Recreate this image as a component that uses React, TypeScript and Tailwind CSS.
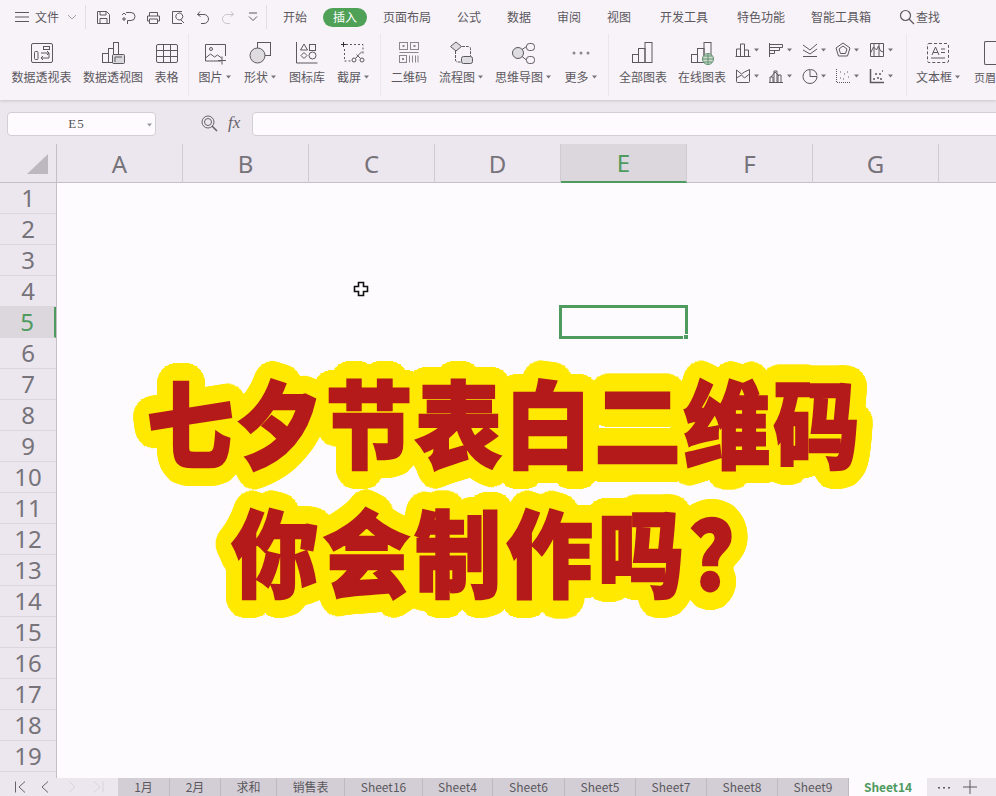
import React from 'react';

const cjk = "font-['Noto_Sans_CJK_SC','Noto_Sans',sans-serif]";

// round outline for the headline, built from a ring of shadows
const ring = (r: number, n: number) =>
  Array.from({ length: n }, (_, i) => {
    const a = (i / n) * Math.PI * 2;
    return `${(Math.cos(a) * r).toFixed(1)}px ${(Math.sin(a) * r).toFixed(1)}px 0 #ffe900`;
  });
const outline = [...ring(17, 64), ...ring(12, 40), ...ring(6, 20)].join(',');

const Svg = ({ w = 24, h = 24, children }: { w?: number; h?: number; children: React.ReactNode }) => (
  <svg width={w} height={h} viewBox={`0 0 ${w} ${h}`} fill="none" stroke="#5b585e" strokeWidth="1">
    {children}
  </svg>
);

const Caret = () => (
  <svg width="5" height="4" viewBox="0 0 5 4" className="ml-[3px] shrink-0">
    <path d="M0 .5h5L2.5 3.5z" fill="#77737a" />
  </svg>
);

const icons: Record<string, React.ReactNode> = {
  pivot: (
    <Svg>
      <rect x="1.5" y="2.5" width="21" height="19" rx="1.5" />
      <rect x="13.5" y="5.5" width="6" height="3" />
      <rect x="4.5" y="10.5" width="3.5" height="8" rx="1" />
      <path d="M11 12h8v5h-7M17 10l2 2-2 2M13 15l-2 2 2 2" />
    </Svg>
  ),
  pivotChart: (
    <Svg>
      <rect x="1.5" y="12.5" width="6" height="9" />
      <rect x="7.5" y="7.5" width="5" height="14" />
      <rect x="12.5" y="1.5" width="5" height="14" />
      <rect x="11.5" y="13.5" width="12" height="9" rx="1" fill="#dbd8dc" />
      <path d="M14 21v-5h7" />
    </Svg>
  ),
  table: (
    <Svg>
      <rect x="1.5" y="3.5" width="21" height="18" rx="1.5" />
      <path d="M1.5 9.5h21M1.5 15.5h21M8.5 3.5v18M15.5 3.5v18" />
    </Svg>
  ),
  image: (
    <Svg>
      <path d="M18 20H2.5V3.500h20V15" />
      <circle cx="8" cy="8" r="1.500" />
      <path d="M2.500 17l5-4 4 3 3-2 4 3M19 15.500v8M15 19.500h8" />
    </Svg>
  ),
  shape: (
    <Svg>
      <rect x="9.500" y="1.500" width="13" height="13" fill="#f8f3f9" />
      <circle cx="9.500" cy="14.500" r="7.500" fill="#dfdce0" />
    </Svg>
  ),
  lib: (
    <Svg>
      <path d="M1.500 1v21h21" />
      <path d="M9 3l3.500 6h-7z" />
      <rect x="14.500" y="3.500" width="6" height="6" />
      <path d="M9 11.500l3 3-3 3-3-3z" />
      <circle cx="17.500" cy="14.500" r="3.500" />
    </Svg>
  ),
  crop: (
    <Svg>
      <path d="M5 3.500h17v10M3.500 8v12h7" strokeDasharray="2 2" />
      <path d="M0 3.500h5M2.500 1v5" stroke="#333" />
      <circle cx="13" cy="19" r="2" />
      <circle cx="21" cy="19" r="2" />
      <path d="M14.500 17.500l3.500-4 3-3M19.500 17.500l-4-4" />
    </Svg>
  ),
  qr: (
    <Svg>
      <rect x="2.500" y="1.500" width="8" height="7" stroke="#8a868d" />
      <rect x="13.500" y="1.500" width="8" height="7" stroke="#8a868d" />
      <rect x="5.500" y="4" width="2" height="2" fill="#8a868d" stroke="none" />
      <rect x="16.500" y="4" width="2" height="2" fill="#8a868d" stroke="none" />
      <path d="M2.500 11.500h19" stroke="#8a868d" />
      <rect x="2.500" y="14.500" width="7" height="7" stroke="#8a868d" />
      <rect x="5" y="17" width="2" height="2" fill="#8a868d" stroke="none" />
      <path d="M12.500 14.500v7M15.500 14.500v7M18.500 14.500v7M21 14.500v7" stroke="#8a868d" />
    </Svg>
  ),
  flow: (
    <Svg>
      <path d="M7 1l5.500 4.500L7 10 1.500 5.500z" fill="#dfdce0" />
      <path d="M13 5.500h6.500a2 2 0 0 1 2 2v8M6.500 10v9a2 2 0 0 0 2 2h4" strokeDasharray="3 1" />
      <rect x="12.500" y="15.500" width="11" height="7" rx="2" fill="#dfdce0" />
    </Svg>
  ),
  mind: (
    <Svg>
      <circle cx="7" cy="12" r="5.500" fill="#dfdce0" />
      <rect x="15.500" y="2.500" width="8" height="7" rx="3" />
      <rect x="15.500" y="15.500" width="8" height="7" rx="3" />
      <path d="M11 8.500l4.500-3M11 15.500l4.500 3.500" />
    </Svg>
  ),
  more: (
    <Svg>
      <circle cx="5" cy="12" r="1.500" fill="#8a868d" stroke="none" />
      <circle cx="12" cy="12" r="1.500" fill="#8a868d" stroke="none" />
      <circle cx="19" cy="12" r="1.500" fill="#8a868d" stroke="none" />
    </Svg>
  ),
  allChart: (
    <Svg>
      <rect x="1.500" y="13.500" width="6" height="8" />
      <rect x="7.500" y="7.500" width="6.500" height="14" />
      <rect x="14" y="1.500" width="7" height="20" />
    </Svg>
  ),
  online: (
    <Svg>
      <rect x="1.500" y="13.500" width="6" height="8" />
      <rect x="7.500" y="7.500" width="6.500" height="14" />
      <rect x="14" y="1.500" width="7" height="14" />
      <circle cx="18" cy="18" r="5.500" fill="#cfdcd2" stroke="#5f8f6d" />
      <path d="M12.500 18h11M18 12.500v11M14 15h8M14 21h8" stroke="#5f8f6d" />
    </Svg>
  ),
  textbox: (
    <Svg>
      <rect x="1.500" y="2.500" width="21" height="19" rx="1.500" strokeDasharray="3 2" />
      <path d="M6 14l3.500-8 3.500 8M7 11.500h5M15 8h4M15 11.500h4M5 17h14" />
    </Svg>
  ),
};

const small: React.ReactNode[] = [
  <path key="a" d="M1.500 14V7h4v7M5.500 14V2h4v12M9.500 14V8h4v6M.5 14.500h15" />,
  <path key="b" d="M1.500 1v14M1.500 2.500h13v3h-13M1.500 5.500h10v3h-10M1.500 8.500h5v3h-5" />,
  <path key="c" d="M1 3l7 5 7-6M1 8l7 4 7-5M1 14.500h14" />,
  <path key="d" d="M8 1l7 5-2.500 8h-9L1 6zM8 4l4 3-1.500 4.500h-5L4 7z" />,
  <path key="e" d="M1.500 1.500h13v13h-13zM1.500 11l3-6 3 3 2-4 2 5 3 1M5 1.500v13M10 1.500v13" />,
  <path key="f" d="M1.500 2l5 4 3-2 5-2.500v12a1 1 0 0 1-1 1h-11a1 1 0 0 1-1-1zM1.500 10l5-3 3 3 5-4" />,
  <path key="g" d="M1 14.500h14M2 14V9h3v5M6 14V3h3v11M10 14V7h3v7M3 9l4-5 4 4" />,
  <path key="h" d="M8 1.500a7 7 0 1 0 7 7H8zM8.500 1.500a7 7 0 0 1 6.500 6" />,
  <path key="i" d="M1.500 1v13.500H15M5 10h1M9 6h1M8 11h1M12 4h1M13 9h1M5 4h1" strokeDasharray="1 1" />,
  <path key="j" d="M1.500 1v13.500H15M4 11h2M8 10h2M11 11h2M6 6h2M10 6h2M13 3h1" strokeWidth="1.500" />,
];

const tools = [
  { label: '数据透视表', icon: 'pivot', w: 'w-[71px]' },
  { label: '数据透视图', icon: 'pivotChart', w: 'w-[72px]' },
  { label: '表格', icon: 'table', w: 'w-[35px]', end: true },
  { label: '图片', icon: 'image', w: 'w-[43px]', caret: true },
  { label: '形状', icon: 'shape', w: 'w-[48px]', caret: true },
  { label: '图标库', icon: 'lib', w: 'w-[46px]' },
  { label: '截屏', icon: 'crop', w: 'w-[46px]', caret: true, end: true },
  { label: '二维码', icon: 'qr', w: 'w-[48px]' },
  { label: '流程图', icon: 'flow', w: 'w-[56px]', caret: true },
  { label: '思维导图', icon: 'mind', w: 'w-[68px]', caret: true },
  { label: '更多', icon: 'more', w: 'w-[47px]', caret: true, end: true },
  { label: '全部图表', icon: 'allChart', w: 'w-[60px]' },
  { label: '在线图表', icon: 'online', w: 'w-[58px]' },
];

const tabs = [
  { label: '开始', w: 'w-[56px]' },
  { label: '插入', w: 'w-[44px]', on: true },
  { label: '页面布局', w: 'w-[80px]' },
  { label: '公式', w: 'w-[44px]' },
  { label: '数据', w: 'w-[56px]' },
  { label: '审阅', w: 'w-[44px]' },
  { label: '视图', w: 'w-[56px]' },
  { label: '开发工具', w: 'w-[74px]' },
  { label: '特色功能', w: 'w-[80px]' },
  { label: '智能工具箱', w: 'w-[80px]' },
];

const quick: React.ReactNode[] = [
  <path key="s" d="M1.500 1.500h9l3 3v9h-12zM4 1.500v3.500h6v-3.500M4 13.500v-5h7v5" />,
  <path key="p" d="M5 2.500h5a4 4 0 0 1 0 8H6.500v3.500M1 5l2-2 2 2M1 9h4M3 7v4" />,
  <path key="r" d="M3.500 6V2.500h8V6M3.500 11H1.500V6h12v5h-2M3.500 9h8v4.500h-8z" />,
  <path key="v" d="M11 1.500H1.500v12H11M6.500 9.500a3.500 3.500 0 1 0 0-6 3.500 3.500 0 0 0 0 6zM9 9l4 4" />,
  <path key="u" d="M4 1.500L1.500 4.500 4.500 6.500M1.500 4.500H8a4.500 4.500 0 0 1 0 9H5" />,
  <path key="d" d="M10 1.500l2.500 3-3 2M12.500 4.500H6a4.500 4.500 0 0 0 0 9h3" stroke="#c9c5cb" />,
  <path key="m" d="M3 3h8M3 6.500l4 4 4-4" />,
];

const sheets = [
  { label: '1月', w: 'w-[52px]' },
  { label: '2月', w: 'w-[51px]' },
  { label: '求和', w: 'w-[56px]' },
  { label: '销售表', w: 'w-[68px]' },
  { label: 'Sheet16', w: 'w-[78px]' },
  { label: 'Sheet4', w: 'w-[70px]' },
  { label: 'Sheet6', w: 'w-[72px]' },
  { label: 'Sheet5', w: 'w-[71px]' },
  { label: 'Sheet7', w: 'w-[71px]' },
  { label: 'Sheet8', w: 'w-[71px]' },
  { label: 'Sheet9', w: 'w-[71px]' },
];

const headline = `${cjk} font-black text-[#b51a1a] text-[86px] leading-none whitespace-nowrap scale-y-[1.1] origin-top [-webkit-text-stroke:2.5px_#b51a1a]`;

const Divider = () => <div className="mx-[4px] h-[62px] w-px shrink-0 bg-[#ebe6ec]" />;

export default function App() {
  return (
    <div className={`relative flex h-[796px] w-[996px] flex-col overflow-hidden bg-[#fefbfe] ${cjk}`}>
      {/* ribbon */}
      <div className="z-10 h-[100px] shrink-0 bg-[#f8f3f9] shadow-[0_1px_3px_#c9c4cb] text-xs text-[#5b585e]">
        <div className="flex h-[34px] items-center pl-[15px]">
          <svg width="14" height="12" viewBox="0 0 14 12" stroke="#5b585e" className="shrink-0">
            <path d="M0 1.500h14M0 6h14M0 10.500h14" />
          </svg>
          <span className="ml-[6px] w-[26px] shrink-0">文件</span>
          <svg width="10" height="6" viewBox="0 0 10 6" fill="none" stroke="#a5a1a8" className="ml-[6px] shrink-0">
            <path d="M1 1l4 4 4-4" />
          </svg>
          <div className="ml-[8px] h-[24px] w-px shrink-0 bg-[#e3dee5]" />
          <div className="ml-[5px] flex shrink-0">
            {quick.map((p, i) => (
              <div key={i} className="flex w-[25px] justify-center">
                <svg width="15" height="15" viewBox="0 0 15 15" fill="none" stroke="#5b585e">{p}</svg>
              </div>
            ))}
          </div>
          <div className="h-[24px] w-px shrink-0 bg-[#e3dee5]" />
          {tabs.map((t) => (
            <div key={t.label} className={`${t.w} flex shrink-0 justify-center`}>
              {t.on ? (
                <span className="flex h-[19px] w-[44px] items-center justify-center rounded-full bg-[#4fa157] text-white">{t.label}</span>
              ) : (
                t.label
              )}
            </div>
          ))}
          <div className="ml-[18px] flex shrink-0 items-center">
            <svg width="16" height="16" viewBox="0 0 16 16" fill="none" stroke="#5b585e" strokeWidth="1.2">
              <circle cx="6.500" cy="6.500" r="5" />
              <path d="M10 10l5 5" />
            </svg>
            <span className="ml-px">查找</span>
          </div>
        </div>

        <div className="flex h-[66px] items-start pl-[6px] whitespace-nowrap">
          {tools.map((t) => (
            <React.Fragment key={t.label}>
              <div className={`${t.w} flex shrink-0 flex-col items-center pt-[7px]`}>
                {icons[t.icon]}
                <div className="mt-[4px] flex items-center">
                  {t.label}
                  {t.caret && <Caret />}
                </div>
              </div>
              {t.end && <Divider />}
            </React.Fragment>
          ))}
          <div className="grid w-[171px] shrink-0 grid-cols-5 gap-y-[10px] pt-[8px] pl-[4px]">
            {small.map((p, i) => (
              <div key={i} className="flex items-center">
                <svg width="16" height="16" viewBox="0 0 16 16" fill="none" stroke="#5b585e">{p}</svg>
                <Caret />
              </div>
            ))}
          </div>
          <Divider />
          <div className="flex w-[54px] shrink-0 flex-col items-center pt-[7px]">
            {icons.textbox}
            <div className="mt-[4px] flex items-center">
              文本框
              <Caret />
            </div>
          </div>
          <div className="flex w-[31px] shrink-0 flex-col overflow-hidden pt-[7px] pl-[9px]">
            <div className="ml-[10px] h-[24px] w-[12px] rounded-l-[2px] border border-r-0 border-[#5b585e]" />
            <div className="mt-[4px] text-[11px] leading-4 whitespace-nowrap">页眉</div>
          </div>
        </div>
      </div>

      {/* formula bar */}
      <div className="flex h-[44px] shrink-0 items-start bg-[#ece7ee] pt-[12px]">
        <div className="relative ml-[7px] flex h-[24px] w-[149px] shrink-0 items-center justify-center rounded-[4px] border border-[#d3ced5] bg-[#fefbfe] pr-[10px] font-['Liberation_Serif',serif] text-[13px] tracking-[1px] text-[#555]">
          E5
          <svg width="5" height="4" viewBox="0 0 5 4" className="absolute right-[3px] top-[10px]">
            <path d="M0 .5h5L2.500 3.500z" fill="#9a969d" />
          </svg>
        </div>
        <svg width="17" height="17" viewBox="0 0 17 17" fill="none" stroke="#66626a" className="ml-[45px] mt-[3px] shrink-0">
          <circle cx="7" cy="7" r="6" />
          <circle cx="7" cy="7" r="3.500" />
          <path d="M11 11l5 5" strokeWidth="1.600" />
        </svg>
        <span className="ml-[10px] mt-[1px] w-[16px] shrink-0 font-['Liberation_Serif',serif] text-[17px] italic leading-[20px] text-[#66626a]">fx</span>
        <div className="ml-[8px] h-[24px] w-[760px] shrink-0 rounded-[4px] border border-[#d3ced5] bg-[#fefbfe]" />
      </div>

      {/* column headers */}
      <div className="flex h-[39px] shrink-0 border-b border-[#c4bfc6] bg-[#ece7ee] font-['Noto_Sans',sans-serif] text-2xl text-[#77737a]">
        <div className="flex w-[57px] shrink-0 items-start justify-end border-r border-[#c4bfc6] pt-[10px] pr-[8px]">
          <svg width="21" height="20" viewBox="0 0 21 20">
            <path d="M21 0v20H0z" fill="#bdb8bf" />
          </svg>
        </div>
        {['A', 'B', 'C', 'D', 'E', 'F', 'G'].map((c) => (
          <div
            key={c}
            className={`flex h-[39px] w-[126px] shrink-0 items-center justify-center border-r border-[#d0cbd2] ${
              c === 'E' ? 'border-b-2 border-b-[#4f9a5f] bg-[#dcd7dd] text-[#4f9a5f]' : ''
            }`}
          >
            {c}
          </div>
        ))}
      </div>

      {/* sheet body */}
      <div className="relative flex-1">
        <div className="h-full w-[57px] border-r border-[#c4bfc6] bg-[#ece7ee] font-['Noto_Sans',sans-serif] text-2xl text-[#77737a]">
          {Array.from({ length: 19 }, (_, i) => i + 1).map((n) => (
            <div
              key={n}
              className={`flex h-[31px] items-center justify-center border-b border-[#dcd7dd] ${
                n === 5 ? 'border-r-2 border-r-[#4f9a5f] bg-[#dcd7dd] text-[#4f9a5f]' : ''
              }`}
            >
              {n}
            </div>
          ))}
        </div>

        {/* selected cell */}
        <div className="absolute left-[559px] top-[122px] h-[34px] w-[129px] border-[3px] border-[#4f9a5f]">
          <div className="absolute -bottom-[4px] -right-[4px] h-[6px] w-[6px] border border-[#fefbfe] bg-[#4f9a5f]" />
        </div>

        {/* cell cursor */}
        <svg width="16" height="16" viewBox="0 0 16 16" className="absolute left-[353px] top-[98px]">
          <path d="M5.500 1.500h5v4h4v5h-4v4h-5v-4h-4v-5h4z" fill="#fff" stroke="#111" strokeWidth="1.600" />
        </svg>

        {/* headline picture */}
        <div className="absolute left-[147px] top-[190px]" style={{ textShadow: outline }}>
          <div className={`${headline} tracking-[3.500px]`}>七夕节表白二维码</div>
        </div>
        <div className="absolute left-[232px] top-[319px]" style={{ textShadow: outline }}>
          <div className={`${headline} tracking-[5.500px]`}>你会制作吗？</div>
        </div>
      </div>

      {/* sheet tabs */}
      <div className="flex h-[18px] shrink-0 items-center bg-[#ece7ee] text-xs text-[#5b585e]">
        <div className="flex w-[118px] shrink-0 items-center pl-[14px]">
          <svg width="96" height="12" viewBox="0 0 96 12" fill="none" stroke="#66626a">
            <path d="M1.500 .5v11M11 .5l-6 5.500 6 5.500M34 .5l-6 5.500 6 5.500" />
            <path d="M55 .5l6 5.500-6 5.500M80 .5l6 5.500-6 5.500M89 .5v11" stroke="#d8d3da" />
          </svg>
        </div>
        {sheets.map((s) => (
          <div key={s.label} className={`${s.w} flex h-full shrink-0 items-center justify-center border-r border-[#bfbac1] bg-[#d3ced5]`}>
            {s.label}
          </div>
        ))}
        <div className="flex h-full w-[78px] shrink-0 items-center justify-center bg-[#fefbfe] font-bold text-[#4f9a5f]">Sheet14</div>
        <svg width="14" height="3" viewBox="0 0 14 3" fill="#5b585e" className="ml-[10px] shrink-0">
          <rect x="1" y="1" width="2" height="1.500" />
          <rect x="6" y="1" width="2" height="1.500" />
          <rect x="11" y="1" width="2" height="1.500" />
        </svg>
        <svg width="14" height="14" viewBox="0 0 14 14" stroke="#5b585e" className="ml-[12px] shrink-0">
          <path d="M7 0v14M0 7h14" />
        </svg>
      </div>
    </div>
  );
}
